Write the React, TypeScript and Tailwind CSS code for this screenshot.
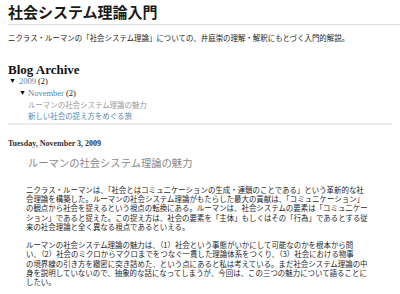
const jp = "font-['Noto_Sans_CJK_JP',sans-serif]";
const serif = "font-['Liberation_Serif','Noto_Sans_CJK_JP',serif]";

const para1 = [
  "ニクラス・ルーマンは、「社会とはコミュニケーションの生成・連鎖のことである」という革新的な社",
  "会理論を構築した。ルーマンの社会システム理論がもたらした最大の貢献は、「コミュニケーション」",
  "の観点から社会を捉えるという視点の転換にある。ルーマンは、社会システムの要素は「コミュニケー",
  "ション」であると捉えた。この捉え方は、社会の要素を「主体」もしくはその「行為」であるとする従",
  "来の社会理論と全く異なる視点であるといえる。",
];

const para2 = [
  "ルーマンの社会システム理論の魅力は、（1）社会という事態がいかにして可能なのかを根本から問",
  "い、（2）社会のミクロからマクロまでをつなぐ一貫した理論体系をつくり、（3）社会における物事",
  "の境界線の引き方を緻密に突き詰めた、という点にあると私は考えている。まだ社会システム理論の中",
  "身を説明していないので、抽象的な話になってしまうが、今回は、この三つの魅力について語ることに",
  "したい。",
];

const Para = ({ lines, className }: { lines: string[]; className?: string }) => (
  <div className={`text-[7.45px] text-[#1e1e1e] whitespace-nowrap ${jp} ${className ?? ""}`}>
    {lines.map((l, i) => (
      <div key={i} className="h-[9.2px] leading-[9.2px] overflow-hidden">
        {l}
      </div>
    ))}
  </div>
);

export default function App() {
  return (
    <div className="w-[400px] h-[294px] overflow-hidden bg-white pl-2">
      <header className="border-b border-[#dcdcdc]">
        <h1 className={`pt-[2px] pb-[2px] text-[15px] leading-[20px] font-bold text-[#1a1a1a] ${jp}`}>
          社会システム理論入門
        </h1>
      </header>
      <p className={`mt-[8px] text-[7.45px] leading-[10px] text-[#222] ${jp}`}>
        ニクラス・ルーマンの「社会システム理論」についての、井庭崇の理解・解釈にもとづく入門的解説。
      </p>

      <section className="mt-[21px] mr-2">
        <h2 className={`text-[13px] leading-[12px] font-bold text-[#111] ${serif}`}>Blog Archive</h2>
        <div className={`h-[11px] flex items-center text-[8.5px] ${serif}`}>
          <span className="w-[11px] pl-[1px] text-[7px] text-black">▼</span>
          <span className="text-[#5588aa]">2009</span>
          <span className="ml-[2px] text-[#222]">(2)</span>
        </div>
        <div className={`h-[12px] pl-[11px] flex items-center text-[8.5px] ${serif}`}>
          <span className="w-[9px] text-[7px] text-black">▼</span>
          <span className="text-[#5588aa]">November</span>
          <span className="ml-[2px] text-[#222]">(2)</span>
        </div>
        <div className={`pl-[20px] text-[7.45px] leading-[11px] ${jp}`}>
          <div className="text-[#999]">ルーマンの社会システム理論の魅力</div>
          <div className="text-[#5588aa]">新しい社会の捉え方をめぐる旅</div>
        </div>
        <div className="mt-[2px] h-[2px] bg-[#ececec]" />
      </section>

      <h3 className={`mt-[14px] text-[8px] leading-[10px] font-bold text-[#333] ${serif}`}>
        Tuesday, November 3, 2009
      </h3>
      <h4 className={`mt-[7px] ml-[20px] text-[10.3px] leading-[14px] text-[#888] ${jp}`}>
        ルーマンの社会システム理論の魅力
      </h4>
      <div className="ml-[18px] mt-[15px]">
        <Para lines={para1} />
        <Para lines={para2} className="mt-[9.2px]" />
      </div>
    </div>
  );
}
